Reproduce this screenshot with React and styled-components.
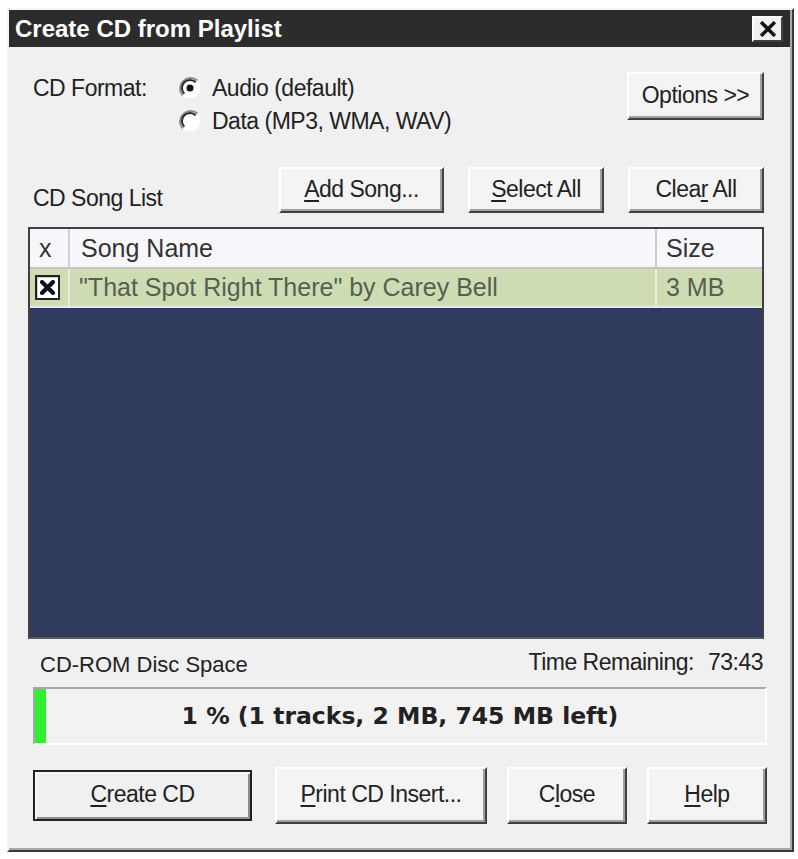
import React from 'react';
import styled, { createGlobalStyle } from 'styled-components';

const GlobalStyle = createGlobalStyle`
    html, body {
        margin: 0;
        padding: 0;
        background: #ffffff;
    }
    body {
        padding: 8px 0 0 7px;
    }
`;

const labelFont = `"Liberation Sans", Arial, sans-serif`;
const listFont = `"Liberation Sans", Arial, sans-serif`;

const Window = styled.div`
    width: 787px;
    box-sizing: border-box;
    border: 2px solid;
    border-color: #f4f4f4 #3a3a3a #3a3a3a #f4f4f4;
    box-shadow: inset -2px -2px 0 #a8a8a8;
    background: #f0f0f0;
    display: flex;
    flex-direction: column;
`;

const TitleBar = styled.div`
    height: 37px;
    margin-right: 2px;
    background: #2c2c2c;
    display: flex;
    align-items: center;
    justify-content: space-between;
    padding: 0 7px 0 6px;

    h1 {
        margin: 0;
        font-family: ${listFont};
        font-weight: bold;
        font-size: 24px;
        line-height: 37px;
        color: #ffffff;
    }
`;

const CloseBox = styled.button`
    width: 31px;
    height: 26px;
    padding: 0;
    box-sizing: border-box;
    border: 2px solid;
    border-color: #ffffff #404040 #404040 #ffffff;
    background: #f0f0f0;
    display: flex;
    align-items: center;
    justify-content: center;
`;

const Body = styled.div`
    display: flex;
    flex-direction: column;
    padding: 25px 25px 26px 19px;
    font-family: ${labelFont};
    font-size: 23px;
    letter-spacing: -0.5px;
    color: #222;
`;

const FormatRow = styled.div`
    display: flex;
    align-items: flex-start;
    padding-left: 5px;
    margin-right: 3px;
`;

const FieldLabel = styled.div`
    width: ${p => p.$width || 'auto'};
    flex: ${p => p.$grow ? 1 : 'none'};
    line-height: 30px;
    margin-top: ${p => p.$top || 0}px;
`;

const RadioGroup = styled.div`
    display: flex;
    flex-direction: column;
    gap: 3px;
    flex: 1;
    margin-top: 1px;
`;

const RadioItem = styled.label`
    display: flex;
    align-items: center;
    gap: 10px;
    line-height: 30px;
`;

const Btn = styled.button`
    width: ${p => p.$w}px;
    height: ${p => p.$h || 46}px;
    box-sizing: border-box;
    padding: 0 0 2px;
    border: 2px solid;
    border-color: #ffffff #404040 #404040 #ffffff;
    box-shadow: inset -2px -2px 0 #a0a0a0;
    background: #f4f4f4;
    font-family: ${labelFont};
    font-size: 23px;
    letter-spacing: -0.5px;
    color: #222;
    flex: none;

    u {
        text-decoration-thickness: 2px;
        text-underline-offset: 3px;
    }
`;

const DefaultBtn = styled(Btn)`
    border-color: #222;
    box-shadow: inset 2px 2px 0 #f8f8f8, inset -2px -2px 0 #8c8c8c;
    background: #f0f0f0;
`;

const ListBar = styled.div`
    display: flex;
    align-items: flex-end;
    gap: 24px;
    margin-top: 31px;
    padding-left: 5px;
    margin-right: 3px;
`;

const ListBox = styled.div`
    margin-top: 14px;
    margin-right: 3px;
    height: 412px;
    box-sizing: border-box;
    border: 2px solid;
    border-color: #404040 #404040 #5a5a5a #404040;
    background: #303a5c;
    font-family: ${listFont};
    font-size: 25px;
    letter-spacing: 0;
`;

const Row = styled.div`
    display: grid;
    grid-template-columns: 40px 1fr 105px;
    height: ${p => p.$h}px;
    background: ${p => p.$bg};
    color: ${p => p.$color};
    border-bottom: 2px solid ${p => p.$line};
`;

const Cell = styled.div`
    display: flex;
    align-items: center;
    padding-left: ${p => p.$pad || 0}px;
    border-right: ${p => p.$last ? 'none' : `2px solid ${p.$line}`};
    white-space: nowrap;
    overflow: hidden;
`;

const CheckBox = styled.span`
    width: 25px;
    height: 25px;
    box-sizing: border-box;
    border: 2px solid #222;
    box-shadow: inset 1px 1px 0 #c8c8c8;
    background: #ffffff;
    display: flex;
    align-items: center;
    justify-content: center;
    margin-left: 5px;
`;

const SpaceRow = styled.div`
    display: flex;
    align-items: center;
    justify-content: space-between;
    margin-top: 8px;
    height: 30px;
    padding: 0 4px 0 12px;

    span.disc {
        font-family: ${listFont};
        font-size: 22px;
        letter-spacing: 0;
        margin-top: 6px;
    }
`;

const TimeLeft = styled.div`
    display: flex;
    gap: 14px;
    line-height: 30px;
`;

const Meter = styled.div`
    margin: 10px 0 0 5px;
    height: 58px;
    box-sizing: border-box;
    border: 2px solid;
    border-color: #a8a8a8 #ffffff #ffffff #a8a8a8;
    background: #f2f2f2;
    display: flex;
`;

const MeterFill = styled.div`
    background: #2ef02e;
    flex: none;
`;

const MeterText = styled.div`
    flex: 1;
    display: flex;
    align-items: center;
    justify-content: center;
    padding-right: 11px;
    font-family: "DejaVu Sans", Verdana, sans-serif;
    font-weight: bold;
    font-size: 23.5px;
    letter-spacing: 0;
    color: #222;
`;

const ButtonRow = styled.div`
    display: flex;
    align-items: center;
    margin: 22px 0 0 5px;
    gap: 20px;

    & > :first-child {
        margin-right: 3px;
    }
`;

const Radio = ({ checked }) => (
    <svg width="24" height="24" viewBox="0 0 24 24">
        <circle cx="12" cy="12" r="10.5" fill="#ffffff" />
        <path d="M 19.4 4.6 A 10.5 10.5 0 0 0 4.6 19.4" stroke="#8a8a8a" strokeWidth="2" fill="none" />
        <path d="M 17.7 6.3 A 8 8 0 0 0 6.3 17.7" stroke="#2a2a2a" strokeWidth="2" fill="none" />
        {checked && <circle cx="12" cy="12" r="3.5" fill="#111" />}
    </svg>
);

const Cross = ({ size, weight }) => (
    <svg width={size} height={size} viewBox="0 0 14 14">
        <path d="M2 2 L12 12 M12 2 L2 12" stroke="#111" strokeWidth={weight} strokeLinecap="square" />
    </svg>
);

const songs = [
    { name: '"That Spot Right There" by Carey Bell', size: '3 MB' },
];

export default function App() {
    const usedPct = 1.5;

    return (
        <>
            <GlobalStyle />
            <Window>
                <TitleBar>
                    <h1>Create CD from Playlist</h1>
                    <CloseBox aria-label="Close">
                        <Cross size={16} weight={3} />
                    </CloseBox>
                </TitleBar>

                <Body>
                    <FormatRow>
                        <FieldLabel $width="145px" $top={1}>CD Format:</FieldLabel>
                        <RadioGroup>
                            <RadioItem><Radio checked />Audio (default)</RadioItem>
                            <RadioItem><Radio />Data (MP3, WMA, WAV)</RadioItem>
                        </RadioGroup>
                        <Btn $w={137} $h={48}>Options &gt;&gt;</Btn>
                    </FormatRow>

                    <ListBar>
                        <FieldLabel $grow>CD Song List</FieldLabel>
                        <Btn $w={165}><u>A</u>dd Song...</Btn>
                        <Btn $w={136}><u>S</u>elect All</Btn>
                        <Btn $w={136}>Clea<u>r</u> All</Btn>
                    </ListBar>

                    <ListBox>
                        <Row $h={38} $bg="#f7f7fb" $color="#333" $line="#c4c4c4">
                            <Cell $pad={9} $line="#d0d0d0">x</Cell>
                            <Cell $pad={11} $line="#d0d0d0">Song Name</Cell>
                            <Cell $pad={9} $last>Size</Cell>
                        </Row>
                        {songs.map(song => (
                            <Row key={song.name} $h={37} $bg="#cddcb3" $color="#56604f" $line="#e6ecdc">
                                <Cell $line="#e6ecdc">
                                    <CheckBox><Cross size={15} weight={4} /></CheckBox>
                                </Cell>
                                <Cell $pad={9} $line="#e6ecdc">{song.name}</Cell>
                                <Cell $pad={9} $last>{song.size}</Cell>
                            </Row>
                        ))}
                    </ListBox>

                    <SpaceRow>
                        <span className="disc">CD-ROM Disc Space</span>
                        <TimeLeft>
                            <span>Time Remaining:</span>
                            <span>73:43</span>
                        </TimeLeft>
                    </SpaceRow>

                    <Meter>
                        <MeterFill style={{ width: `${usedPct}%` }} />
                        <MeterText>1 % (1 tracks, 2 MB, 745 MB left)</MeterText>
                    </Meter>

                    <ButtonRow>
                        <DefaultBtn $w={219} $h={51}><u>C</u>reate CD</DefaultBtn>
                        <Btn $w={212} $h={57}><u>P</u>rint CD Insert...</Btn>
                        <Btn $w={120} $h={57}>C<u>l</u>ose</Btn>
                        <Btn $w={120} $h={57}><u>H</u>elp</Btn>
                    </ButtonRow>
                </Body>
            </Window>
        </>
    );
}
